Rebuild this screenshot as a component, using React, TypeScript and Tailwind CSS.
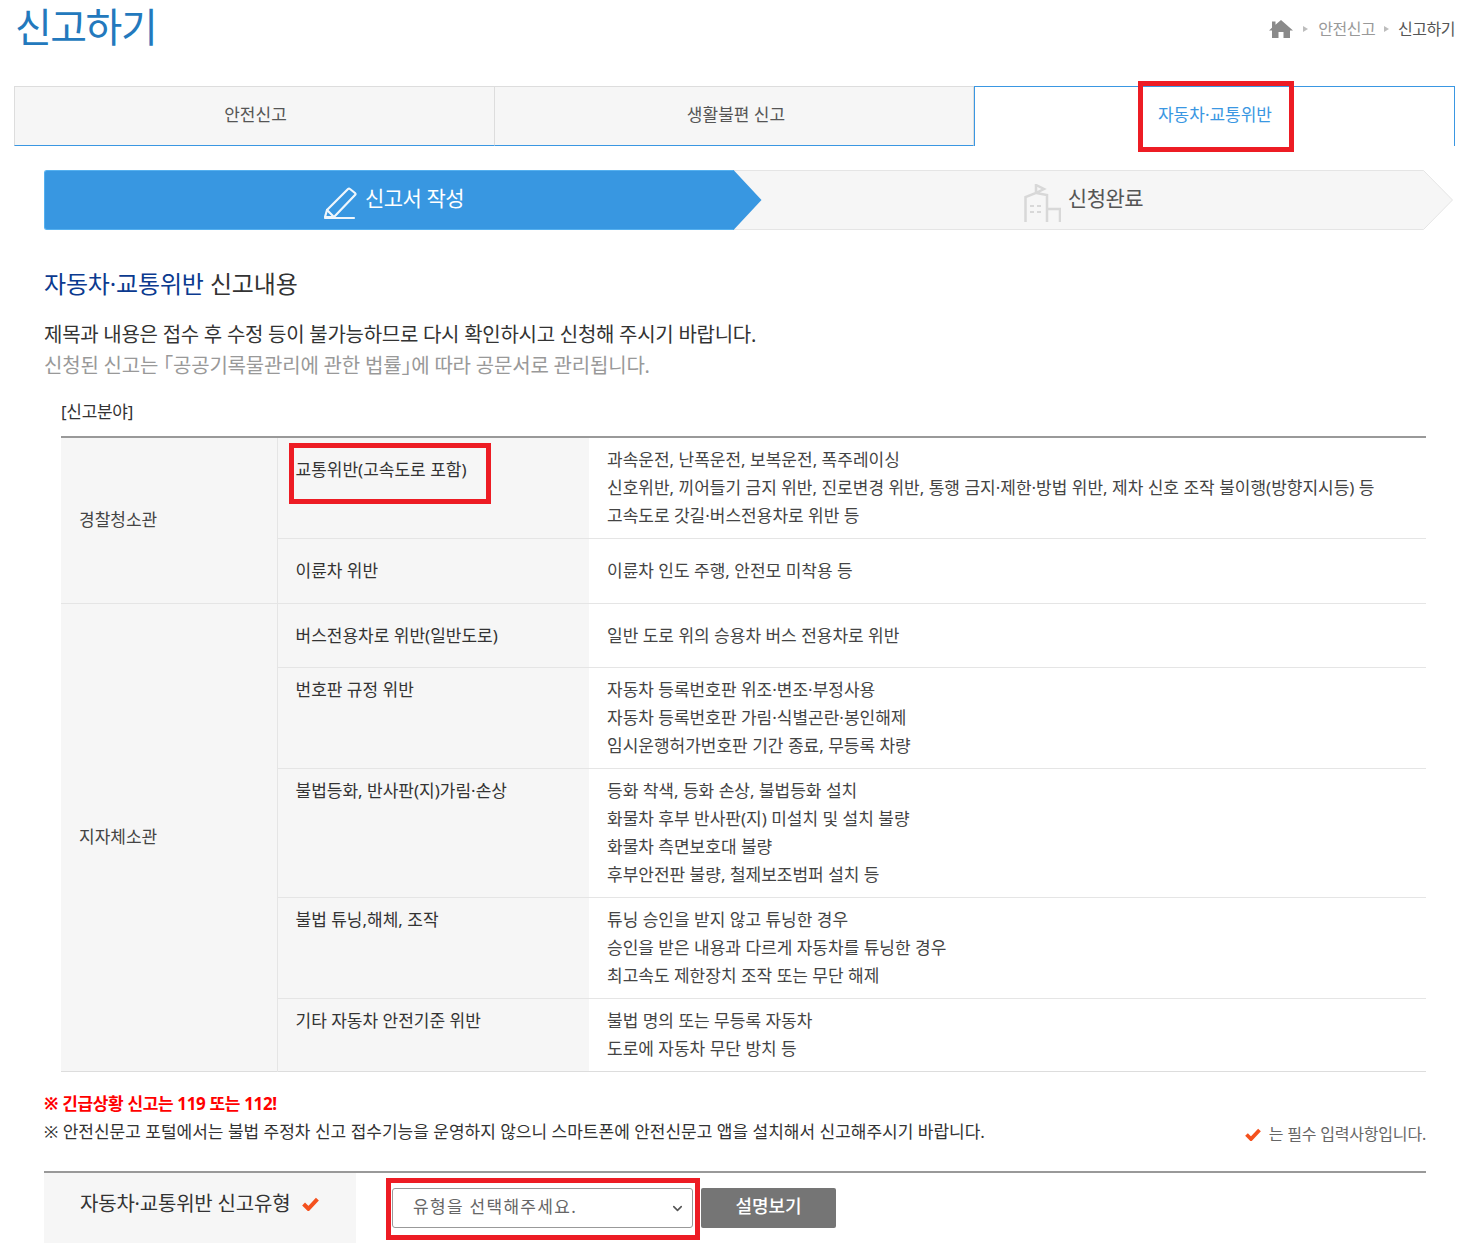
import { ChevronDown } from 'lucide-react';

const rows = [
    { name: '교통위반(고속도로 포함)', lines: ['과속운전, 난폭운전, 보복운전, 폭주레이싱', '신호위반, 끼어들기 금지 위반, 진로변경 위반, 통행 금지·제한·방법 위반, 제차 신호 조작 불이행(방향지시등) 등', '고속도로 갓길·버스전용차로 위반 등'] },
    { name: '이륜차 위반', lines: ['이륜차 인도 주행, 안전모 미착용 등'] },
    { name: '버스전용차로 위반(일반도로)', lines: ['일반 도로 위의 승용차 버스 전용차로 위반'] },
    { name: '번호판 규정 위반', lines: ['자동차 등록번호판 위조·변조·부정사용', '자동차 등록번호판 가림·식별곤란·봉인해제', '임시운행허가번호판 기간 종료, 무등록 차량'] },
    { name: '불법등화, 반사판(지)가림·손상', lines: ['등화 착색, 등화 손상, 불법등화 설치', '화물차 후부 반사판(지) 미설치 및 설치 불량', '화물차 측면보호대 불량', '후부안전판 불량, 철제보조범퍼 설치 등'] },
    { name: '불법 튜닝,해체, 조작', lines: ['튜닝 승인을 받지 않고 튜닝한 경우', '승인을 받은 내용과 다르게 자동차를 튜닝한 경우', '최고속도 제한장치 조작 또는 무단 해제'] },
    { name: '기타 자동차 안전기준 위반', lines: ['불법 명의 또는 무등록 자동차', '도로에 자동차 무단 방치 등'] },
];

function Check({ className }: { className: string }) {
    return (
        <svg viewBox="0 0 16 13" className={className} fill="none">
            <path d="M1.5 6.5 L6 11 L14.5 2" stroke="#f4511e" strokeWidth="3.8" />
        </svg>
    );
}

function Crumb() {
    return (
        <svg viewBox="0 0 5 6" className="h-[6px] w-[5px]" fill="#bdbdbd">
            <path d="M0 0 L5 3 L0 6 Z" />
        </svg>
    );
}

function Tab({ label, active, first }: { label: string; active?: boolean; first?: boolean }) {
    if (active) {
        return (
            <div className="relative flex h-[60px] w-[481px] items-center justify-center border-x border-t border-x-[#3a97e2] border-t-[#3a97e2] bg-white pb-[3px] pl-[1px] text-[17px] text-[#3a97e2]">
                {label}
                <div className="absolute left-[163px] top-[-6px] h-[71px] w-[156px] border-[5px] border-[#ed1c24]" />
            </div>
        );
    }
    return (
        <div className={`flex h-[60px] items-center justify-center border-t border-r border-b border-t-[#dddddd] border-r-[#dddddd] border-b-[#3a97e2] bg-[#f6f6f6] pb-[3px] text-[17px] text-[#555555] ${first ? 'w-[481px] border-l border-l-[#dddddd] pl-[2px]' : 'w-[479px] pl-[4px]'}`}>
            {label}
        </div>
    );
}

export default function App() {
    return (
        <div className="w-[1479px] h-[1243px] overflow-hidden bg-white pl-[14px] font-['Noto_Sans','Noto_Sans_CJK_KR',sans-serif] text-[#333333]">
            <div className="flex h-[86px] items-start justify-between pr-[24px]">
                <h1 className="pt-[1px] pl-[1px] text-[40px] leading-[52px] font-normal tracking-[-1.5px] text-[#2379bd]">신고하기</h1>
                <div className="flex items-center pt-[19px] text-[16px] leading-[20px] tracking-[-0.5px] text-[#999999]">
                    <svg viewBox="0 0 24 20" className="mr-[10px] h-[20px] w-[24px]" fill="#8a8a8a">
                        <path d="M12 1 L24 11.5 L21 11.5 L21 19 L14.5 19 L14.5 13 L9.5 13 L9.5 19 L3 19 L3 11.5 L0 11.5 L3 8.8 L3 2.5 L6.5 2.5 L6.5 5.8 Z" />
                    </svg>
                    <Crumb />
                    <span className="ml-[10px]">안전신고</span>
                    <span className="mx-[9px]"><Crumb /></span>
                    <span className="text-[#555555]">신고하기</span>
                </div>
            </div>

            <div className="flex">
                <Tab label="안전신고" first />
                <Tab label="생활불편 신고" />
                <Tab label="자동차·교통위반" active />
            </div>

            <div className="mt-[24px] ml-[30px] flex h-[60px] w-[1409px]">
                <div className="relative z-10 flex h-[60px] w-[690px] items-center justify-center rounded-l-[3px] border-y border-l border-[#55b0ef] bg-[#3897e1] pl-[8px] text-[21px] tracking-[-0.5px] text-white">
                    <svg viewBox="0 0 34 34" className="mr-[8px] h-[34px] w-[34px] translate-y-[3px]" fill="none" stroke="white" strokeWidth="2.2" strokeLinejoin="round" strokeLinecap="round" opacity="0.92">
                        <path d="M2 31 L4 24 L25 3 Q26 2 27 3 L32 7 Q33 8 32 9 L11 31 Z" />
                        <path d="M4 24 L10 30" />
                        <path d="M2 32 L31 32" />
                    </svg>
                    <span className="-translate-y-[1px]">신고서 작성</span>
                    <svg viewBox="0 0 28 60" className="absolute left-[688px] top-[-1px] h-[60px] w-[29px]" fill="#3897e1">
                        <path d="M0 0 L0 60 L28 30 Z" />
                    </svg>
                </div>
                <div className="relative flex h-[60px] w-[689px] items-center justify-center border-y border-[#e5e5e5] bg-[#f6f6f6] pl-[10px] text-[21px] tracking-[-0.5px] text-[#555555]">
                    <svg viewBox="0 0 37 38" className="mr-[7px] h-[38px] w-[37px] translate-y-[3px]" fill="none" stroke="#d8d8d8" strokeWidth="2.5">
                        <path d="M1.5 38 L1.5 13 L12 9 L12 1 L20 5 L12 9 L23 11 L23 38" />
                        <path d="M23 25 L36 25 L36 38" />
                        <path d="M6 22 L10 22 M13 22 L17 22 M6 28 L10 28 M13 28 L17 28" strokeWidth="2" />
                    </svg>
                    <span className="-translate-y-[1px]">신청완료</span>
                    <svg viewBox="0 0 30 60" className="absolute left-[689px] top-[-1px] h-[60px] w-[30px]" fill="#f6f6f6" stroke="#e5e5e5">
                        <path d="M0 0.5 L0.5 0.5 L29.5 30 L0.5 59.5 L0 59.5" />
                    </svg>
                </div>
            </div>

            <div className="ml-[30px] w-[1382px]">
                <h2 className="mt-[36px] text-[24px] leading-[36px] font-normal tracking-[-0.15px] text-[#333333]">
                    <span className="text-[#0b3a8f]">자동차·교통위반</span> 신고내용
                </h2>
                <p className="mt-[17px] text-[20px] leading-[31px] tracking-[-0.27px] text-[#333333]">제목과 내용은 접수 후 수정 등이 불가능하므로 다시 확인하시고 신청해 주시기 바랍니다.</p>
                <p className="text-[20px] leading-[31px] tracking-[-0.2px] text-[#999999]">신청된 신고는 ｢공공기록물관리에 관한 법률｣에 따라 공문서로 관리됩니다.</p>

                <p className="mt-[17px] ml-[17px] text-[17px] leading-[28px] tracking-[-0.3px]">[신고분야]</p>

                <table className="mt-[10px] ml-[17px] w-[1365px] table-fixed border-collapse border-t-2 border-b border-t-[#999999] border-b-[#dddddd] text-[17px] leading-[28px] text-[#444444]">
                    <colgroup>
                        <col className="w-[216px]" />
                        <col className="w-[312px]" />
                        <col />
                    </colgroup>
                    <tbody>
                        {rows.map((row, i) => {
                            const pad = i === 1 ? 'pt-[18px] pb-[18px]' : i === 2 ? 'pt-[18px] pb-[17px]' : 'pt-[8px] pb-[8px]';
                            return (
                                <tr key={row.name} className="border-b border-[#e5e5e5] last:border-b-0">
                                    {i === 0 && <td rowSpan={2} className="border-r border-[#e5e5e5] bg-[#f6f6f6] pb-[2px] pl-[18px]">경찰청소관</td>}
                                    {i === 2 && <td rowSpan={5} className="border-r border-[#e5e5e5] bg-[#f6f6f6] pb-[2px] pl-[18px]">지자체소관</td>}
                                    <td className={`relative bg-[#f6f6f6] pl-[18px] align-top text-[#333333] ${pad}`}>
                                        <div className={i === 0 ? 'mt-[10px]' : ''}>{row.name}</div>
                                        {i === 0 && <div className="absolute left-[11px] top-[5px] h-[61px] w-[202px] border-[5px] border-[#ed1c24]" />}
                                    </td>
                                    <td className={`pl-[18px] align-top ${pad}`}>
                                        {row.lines.map((line) => (
                                            <div key={line}>{line}</div>
                                        ))}
                                    </td>
                                </tr>
                            );
                        })}
                    </tbody>
                </table>

                <div className="relative mt-[18px] text-[17px] leading-[28px]">
                    <p className="font-bold tracking-[-0.35px] text-[#ff0000]">※ 긴급상황 신고는 119 또는 112!</p>
                    <p>※ 안전신문고 포털에서는 불법 주정차 신고 접수기능을 운영하지 않으니 스마트폰에 안전신문고 앱을 설치해서 신고해주시기 바랍니다.</p>
                    <div className="absolute right-0 top-[30px] flex items-center text-[16px] tracking-[-0.2px] text-[#666666]">
                        <Check className="mr-[8px] h-[13px] w-[16px]" />
                        는 필수 입력사항입니다.
                    </div>
                </div>

                <div className="mt-[25px] flex h-[72px] border-t-2 border-[#999999]">
                    <div className="flex h-[70px] w-[312px] items-start bg-[#f6f6f6] pt-[14px] pl-[36px] text-[20px] leading-[34px] tracking-[-0.2px]">
                        자동차·교통위반 신고유형
                        <Check className="mt-[10px] ml-[12px] h-[14px] w-[17px]" />
                    </div>
                    <div className="relative mt-[15px] ml-[36px] flex h-[40px] w-[301px] items-center justify-between rounded-[3px] border border-[#999999] pr-[7px] pb-[2px] pl-[20px] text-[17px] tracking-[1.3px] text-[#666666]">
                        유형을 선택해주세요.
                        <ChevronDown className="h-[15px] w-[15px] translate-y-[1px] text-[#555555]" strokeWidth={2.5} />
                        <div className="absolute left-[-7px] top-[-11px] h-[62px] w-[314px] border-[5px] border-[#ed1c24]" />
                    </div>
                    <div className="mt-[15px] ml-[8px] flex h-[40px] w-[135px] items-center justify-center rounded-[2px] bg-[#757575] pb-[4px] text-[18px] font-medium text-white">설명보기</div>
                </div>
            </div>
        </div>
    );
}
